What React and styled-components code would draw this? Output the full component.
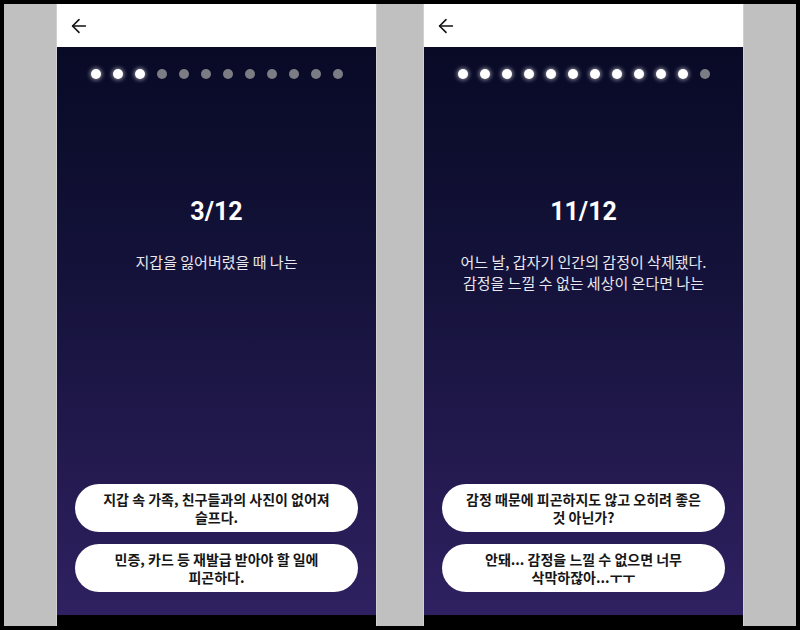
import React from 'react'
import styled, { createGlobalStyle } from 'styled-components'
import { ArrowLeft } from 'lucide-react'

const GlobalStyle = createGlobalStyle`
    html, body {
        margin: 0;
        padding: 0;
        background: #000;
    }
    body {
        width: 800px;
        height: 630px;
        overflow: hidden;
        font-family: Roboto, "Noto Sans CJK KR", sans-serif;
    }
`

const Frame = styled.div`
    margin: 4px;
    width: 792px;
    height: 622px;
    background: #c0c0c0;
    display: flex;
    justify-content: center;
    gap: 48px;
    overflow: hidden;
`

const Phone = styled.section`
    width: 319px;
    display: flex;
    flex-direction: column;
    box-shadow: 0 0 0 1px #d0d0d0;
`

const Header = styled.header`
    height: 43px;
    background: #fff;
    display: flex;
    align-items: center;
    padding-left: 11px;
    color: #111;
    flex-shrink: 0;
`

const Body = styled.main`
    flex: 1;
    display: flex;
    flex-direction: column;
    align-items: center;
    padding: 22px 18px 23px 18px;
    background: linear-gradient(180deg, #080a26 0%, #14123a 40%, #241a50 75%, #2f2161 100%);
`

const Footer = styled.div`
    height: 11px;
    background: #000;
    flex-shrink: 0;
`

const Dots = styled.div`
    display: flex;
    gap: 12px;
    height: 10px;
`

const Dot = styled.span`
    width: 10px;
    height: 10px;
    border-radius: 50%;
    background: ${props => props.active ? '#fff' : '#7c7c84'};
    box-shadow: ${props => props.active ? '0 0 4px 1px rgba(255,255,255,0.55)' : 'none'};
`

const Step = styled.h1`
    margin: 118px 0 0 0;
    font-size: 25px;
    line-height: 29px;
    font-weight: 700;
    color: #fff;
`

const Question = styled.p`
    margin: 25px 0 0 0;
    font-family: "Noto Sans CJK KR", sans-serif;
    font-size: 15px;
    line-height: 21px;
    font-weight: 400;
    color: #e8e8ee;
    text-align: center;
    white-space: pre-line;
    word-break: keep-all;
`

const Answers = styled.div`
    margin-top: auto;
    width: 100%;
    display: flex;
    flex-direction: column;
    gap: 12px;
`

const Answer = styled.button`
    width: 100%;
    min-height: 48px;
    padding: 6px 16px;
    border: none;
    border-radius: 24px;
    background: #fff;
    color: #161616;
    font-family: "Noto Sans CJK KR", sans-serif;
    font-size: 14px;
    line-height: 18px;
    font-weight: 700;
    text-align: center;
    white-space: pre-line;
    word-break: keep-all;
    cursor: pointer;
`

const screens = [
    {
        step: 3,
        question: '지갑을 잃어버렸을 때 나는',
        answers: ['지갑 속 가족, 친구들과의 사진이 없어져\n슬프다.', '민증, 카드 등 재발급 받아야 할 일에\n피곤하다.'],
    },
    {
        step: 11,
        question: '어느 날, 갑자기 인간의 감정이 삭제됐다.\n감정을 느낄 수 없는 세상이 온다면 나는',
        answers: ['감정 때문에 피곤하지도 않고 오히려 좋은\n것 아닌가?', '안돼... 감정을 느낄 수 없으면 너무\n삭막하잖아...ㅜㅜ'],
    },
]

const TOTAL = 12

function Screen({ step, question, answers }) {
    return (
        <Phone>
            <Header>
                <ArrowLeft size={22} strokeWidth={1.7} />
            </Header>
            <Body>
                <Dots>
                    {Array.from({ length: TOTAL }, (_, i) => (
                        <Dot key={i} active={i < step} />
                    ))}
                </Dots>
                <Step>{step}/{TOTAL}</Step>
                <Question>{question}</Question>
                <Answers>
                    {answers.map(a => (
                        <Answer key={a}>{a}</Answer>
                    ))}
                </Answers>
            </Body>
            <Footer />
        </Phone>
    )
}

function App() {
    return (
        <>
            <GlobalStyle />
            <Frame>
                {screens.map(s => (
                    <Screen key={s.step} {...s} />
                ))}
            </Frame>
        </>
    )
}

export default App
